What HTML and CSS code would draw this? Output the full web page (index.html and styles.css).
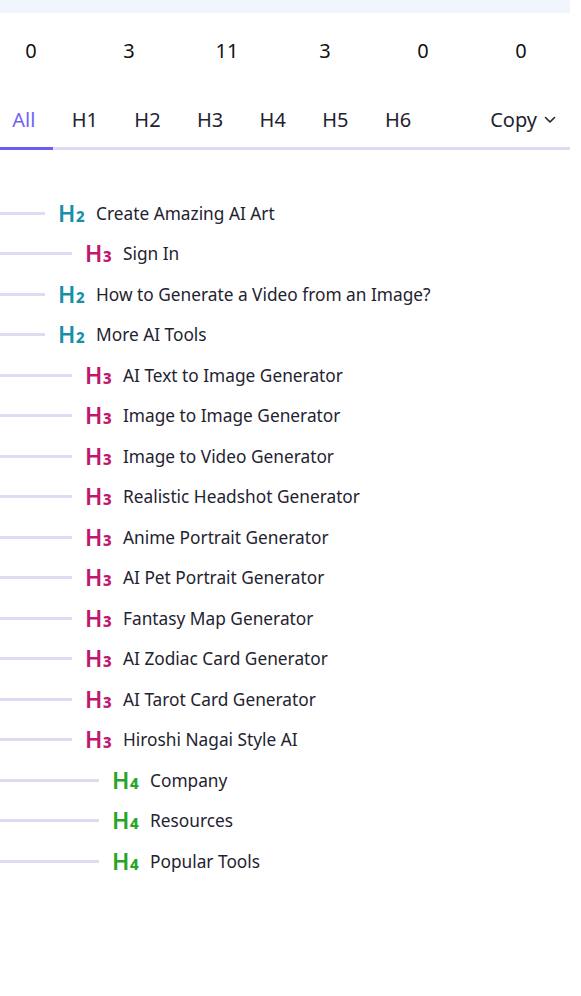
FILE: index.html
```html
<!DOCTYPE html>
<html>
<head>
<meta charset="utf-8">
<link rel="stylesheet" href="styles.css">
</head>
<body>
<div class="page">
  <div class="top-band"></div>
  <div class="counts">
    <span class="count">0</span>
    <span class="count">3</span>
    <span class="count">11</span>
    <span class="count">3</span>
    <span class="count">0</span>
    <span class="count">0</span>
  </div>
  <div class="tabs">
    <span class="tab active">All</span>
    <span class="tab">H1</span>
    <span class="tab">H2</span>
    <span class="tab">H3</span>
    <span class="tab">H4</span>
    <span class="tab">H5</span>
    <span class="tab">H6</span>
    <span class="copy">Copy <svg class="chev" width="12" height="8" viewBox="0 0 12 8"><path d="M1.5 1.5 L6 6 L10.5 1.5" fill="none" stroke="#1f2330" stroke-width="1.6" stroke-linecap="round" stroke-linejoin="round"/></svg></span>
  </div>
  <ul class="tree">
    <li class="row l2"><span class="line"></span><span class="badge h2">H<small>2</small></span><span class="label">Create Amazing AI Art</span></li>
    <li class="row l3"><span class="line"></span><span class="badge h3">H<small>3</small></span><span class="label">Sign In</span></li>
    <li class="row l2"><span class="line"></span><span class="badge h2">H<small>2</small></span><span class="label">How to Generate a Video from an Image?</span></li>
    <li class="row l2"><span class="line"></span><span class="badge h2">H<small>2</small></span><span class="label">More AI Tools</span></li>
    <li class="row l3"><span class="line"></span><span class="badge h3">H<small>3</small></span><span class="label">AI Text to Image Generator</span></li>
    <li class="row l3"><span class="line"></span><span class="badge h3">H<small>3</small></span><span class="label">Image to Image Generator</span></li>
    <li class="row l3"><span class="line"></span><span class="badge h3">H<small>3</small></span><span class="label">Image to Video Generator</span></li>
    <li class="row l3"><span class="line"></span><span class="badge h3">H<small>3</small></span><span class="label">Realistic Headshot Generator</span></li>
    <li class="row l3"><span class="line"></span><span class="badge h3">H<small>3</small></span><span class="label">Anime Portrait Generator</span></li>
    <li class="row l3"><span class="line"></span><span class="badge h3">H<small>3</small></span><span class="label">AI Pet Portrait Generator</span></li>
    <li class="row l3"><span class="line"></span><span class="badge h3">H<small>3</small></span><span class="label">Fantasy Map Generator</span></li>
    <li class="row l3"><span class="line"></span><span class="badge h3">H<small>3</small></span><span class="label">AI Zodiac Card Generator</span></li>
    <li class="row l3"><span class="line"></span><span class="badge h3">H<small>3</small></span><span class="label">AI Tarot Card Generator</span></li>
    <li class="row l3"><span class="line"></span><span class="badge h3">H<small>3</small></span><span class="label">Hiroshi Nagai Style AI</span></li>
    <li class="row l4"><span class="line"></span><span class="badge h4">H<small>4</small></span><span class="label">Company</span></li>
    <li class="row l4"><span class="line"></span><span class="badge h4">H<small>4</small></span><span class="label">Resources</span></li>
    <li class="row l4"><span class="line"></span><span class="badge h4">H<small>4</small></span><span class="label">Popular Tools</span></li>
  </ul>
</div>
</body>
</html>
```

FILE: styles.css
```css
html, body {
  margin: 0;
  padding: 0;
  background: #ffffff;
}
body {
  font-family: "Noto Sans", "Open Sans", sans-serif;
  color: #1f2330;
}
.page {
  width: 570px;
  overflow: hidden;
}
.top-band {
  height: 13px;
  background: #f1f5fd;
}
.counts {
  display: flex;
  height: 74px;
  align-items: center;
  margin-left: -18px;
}
.count {
  width: 98px;
  text-align: center;
  font-size: 20px;
  color: #111111;
}
.tabs {
  display: flex;
  align-items: stretch;
  height: 60px;
  border-bottom: 3px solid #dcdcf2;
  margin-left: -6px;
}
.tab {
  display: flex;
  align-items: center;
  padding: 4px 18.2px 0 18.2px;
  font-size: 20px;
  color: #1f2330;
}
.tab.active {
  color: #6f63f5;
  border-bottom: 3px solid #6c5cf2;
  margin-bottom: -3px;
}
.copy {
  margin-left: auto;
  display: flex;
  align-items: center;
  gap: 7px;
  padding: 4px 14px 0 0;
  font-size: 20px;
  color: #1f2330;
}
.chev {
  display: block;
  margin-top: 2px;
}
.tree {
  list-style: none;
  margin: 0;
  padding: 43px 0 0 0;
}
.row {
  display: flex;
  align-items: center;
  height: 40.5px;
}
.line {
  height: 3px;
  background: #dcdcf2;
  margin-right: 13px;
  flex: none;
}
.l2 .line { width: 45px; }
.l3 .line { width: 72px; }
.l4 .line { width: 99px; }
.badge {
  width: 25px;
  margin-right: 13px;
  font-size: 23px;
  font-weight: 600;
  line-height: 1;
  white-space: nowrap;
  letter-spacing: -0.5px;
  flex: none;
}
.badge small {
  font-size: 15px;
  font-weight: 800;
  margin-left: 1px;
}
.h2 { color: #1a8fa8; }
.h3 { color: #c0186e; }
.h4 { color: #28a428; }
.label {
  font-size: 17.3px;
  color: #1f2330;
}
```
